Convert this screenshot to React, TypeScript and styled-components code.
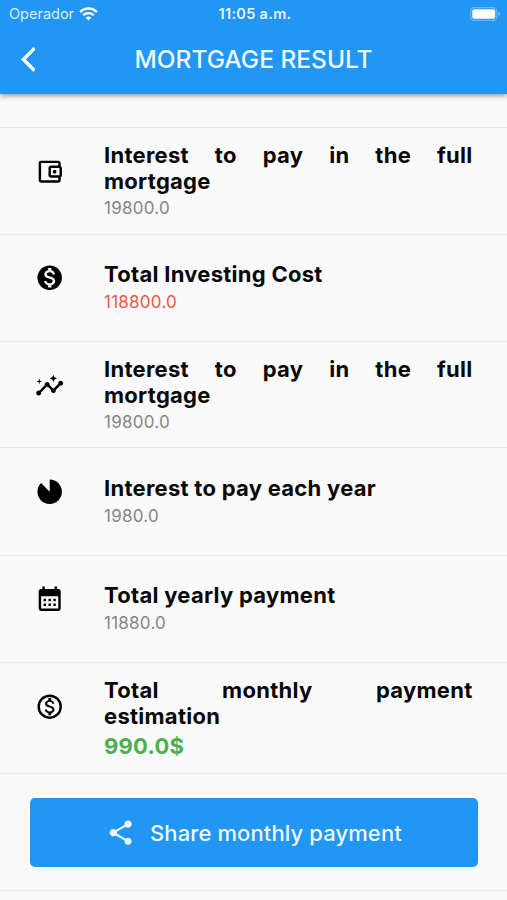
import React from "react";
import type { ReactNode } from "react";
import styled, { createGlobalStyle } from "styled-components";
import {
  MdOutlineAccountBalanceWallet,
  MdMonetizationOn,
  MdInsights,
  MdIncompleteCircle,
  MdCalendarMonth,
  MdShare,
} from "react-icons/md";

const GlobalStyle = createGlobalStyle`
  * { box-sizing: border-box; }
  body {
    margin: 0;
    background: #fafafa;
    font-family: Inter, "Liberation Sans", sans-serif;
  }
`;

const Screen = styled.div`
  width: 507px;
  height: 900px;
  overflow: hidden;
  display: flex;
  flex-direction: column;
  background: #fafafa;
`;

const Header = styled.header`
  height: 94px;
  flex: none;
  background: #2196f3;
  color: #fff;
  box-shadow: 0 2px 5px rgba(0, 0, 0, 0.38);
  z-index: 1;
`;

const StatusBar = styled.div`
  height: 26px;
  display: grid;
  grid-template-columns: 1fr auto 1fr;
  align-items: center;
  padding: 1px 6px 0 9px;
  font-size: 14.5px;
  line-height: 26px;
`;

const Carrier = styled.div`
  display: flex;
  align-items: center;
  gap: 5px;
  color: #d8edfd;
`;

const Clock = styled.div`
  font-weight: 600;
  font-size: 14.5px;
  letter-spacing: 0.3px;
  color: #e6f4fe;
`;

const BatterySlot = styled.div`
  display: flex;
  justify-content: flex-end;
  padding-bottom: 1px;
`;

const NavBar = styled.div`
  height: 68px;
  display: grid;
  grid-template-columns: 64px 1fr 64px;
  align-items: center;
`;

const BackButton = styled.button`
  border: 0;
  background: none;
  color: #fff;
  padding: 0 0 1px 20.5px;
  display: flex;
`;

const PageTitle = styled.h1`
  margin: 0 0 2px;
  text-align: center;
  font-size: 24.5px;
  font-weight: 500;
  white-space: nowrap;
  color: #edf7ff;
`;

const List = styled.main`
  padding-top: 33px;
`;

const Row = styled.section<{ $height: number }>`
  height: ${(p) => p.$height}px;
  border-top: 1px solid #ececec;
  display: grid;
  grid-template-columns: 104px 368.5px;
`;

const IconCell = styled.div<{ $top: number }>`
  padding: ${(p) => p.$top}px 0 0 35px;
  color: #000;
  svg { display: block; }
`;

const Details = styled.div<{ $top: number }>`
  padding-top: ${(p) => p.$top}px;
`;

const Label = styled.h2`
  margin: 0;
  font-size: 22px;
  line-height: 25.7px;
  font-weight: 650;
  letter-spacing: 0.27px;
  text-align: justify;
  color: #080808;
`;

const Amount = styled.p<{ $tone: Tone }>`
  margin: 0;
  font-size: ${(p) => (p.$tone === "positive" ? 22 : 17)}px;
  font-weight: ${(p) => (p.$tone === "positive" ? 650 : 400)};
  line-height: ${(p) => (p.$tone === "positive" ? 34 : 28)}px;
  letter-spacing: 0.25px;
  color: ${(p) => tones[p.$tone]};
`;

const Actions = styled.footer`
  height: 118px;
  border-top: 1px solid #ececec;
  border-bottom: 1px solid #ececec;
  padding: 24px 29px 0 30px;
`;

const ShareButton = styled.button`
  width: 448px;
  height: 69px;
  border: 0;
  border-radius: 5px;
  background: #2196f3;
  color: #edf7ff;
  display: flex;
  align-items: center;
  justify-content: center;
  gap: 14.5px;
  font-family: inherit;
  font-size: 22px;
  font-weight: 500;
  letter-spacing: 0.1px;
  white-space: nowrap;
`;

type Tone = "normal" | "negative" | "positive";

const tones: Record<Tone, string> = {
  normal: "#858585",
  negative: "#f2564b",
  positive: "#4caf50",
};

interface Result {
  icon: ReactNode;
  label: string;
  amount: string;
  tone?: Tone;
  height: number;
  iconTop: number;
  textTop: number;
}

const ICON = 29.4;

const DollarRingIcon = () => (
  <svg width={ICON} height={ICON} viewBox="0 0 24 24" fill="currentColor">
    <circle cx="12" cy="12" r="9" fill="none" stroke="currentColor" strokeWidth="2" />
    <path d="M12.31 11.14c-1.77-.45-2.34-.94-2.34-1.67 0-.84.79-1.43 2.1-1.43 1.38 0 1.9.66 1.94 1.64h1.71c-.05-1.34-.87-2.57-2.49-2.97V5H10.9v1.69c-1.51.32-2.72 1.3-2.72 2.81 0 1.79 1.49 2.69 3.66 3.21 1.95.46 2.34 1.15 2.34 1.87 0 .53-.39 1.39-2.1 1.39-1.6 0-2.23-.72-2.32-1.64H8.04c.1 1.7 1.36 2.66 2.86 2.97V19h2.34v-1.67c1.52-.29 2.72-1.16 2.73-2.77-.01-2.2-1.9-2.96-3.66-3.42z" />
  </svg>
);

const results: Result[] = [
  { icon: <MdOutlineAccountBalanceWallet size={ICON} />, label: "Interest to pay in the full mortgage", amount: "19800.0", height: 107, iconTop: 29, textTop: 15 },
  { icon: <MdMonetizationOn size={ICON} />, label: "Total Investing Cost", amount: "118800.0", tone: "negative", height: 107, iconTop: 28, textTop: 27 },
  { icon: <MdInsights size={ICON} />, label: "Interest to pay in the full mortgage", amount: "19800.0", height: 106, iconTop: 29, textTop: 15 },
  { icon: <MdIncompleteCircle size={ICON} />, label: "Interest to pay each year", amount: "1980.0", height: 108, iconTop: 29, textTop: 28 },
  { icon: <MdCalendarMonth size={ICON} />, label: "Total yearly payment", amount: "11880.0", height: 107, iconTop: 28, textTop: 27 },
  { icon: <DollarRingIcon />, label: "Total monthly payment estimation", amount: "990.0$", tone: "positive", height: 111, iconTop: 29, textTop: 15 },
];

const WifiIcon = () => (
  <svg width="19" height="14" viewBox="0 0 19 14" fill="none" stroke="#fff" strokeWidth="2.3">
    <path d="M1.1 5.1C5.8.3 13.2.3 17.9 5.1" />
    <path d="M4.2 8.2c3-2.9 7.6-2.9 10.6 0" />
    <path d="M9.5 13.6 6.6 10.7c1.7-1.5 4.1-1.5 5.8 0Z" fill="#fff" stroke="none" />
  </svg>
);

const BatteryIcon = () => (
  <svg width="31" height="14" viewBox="0 0 31 14">
    <rect x="0.6" y="0.6" width="26.3" height="12.8" rx="3.6" fill="none" stroke="#6db9f8" strokeWidth="1.2" />
    <rect x="2.3" y="2.3" width="22.9" height="9.4" rx="2" fill="#fff" />
    <path d="M28.3 4.8c2.2.7 2.2 3.7 0 4.4Z" fill="#6db9f8" />
  </svg>
);

const BackIcon = () => (
  <svg width="14.9" height="24.9" viewBox="-0.2 1.9 12.1 20.2" fill="currentColor" stroke="currentColor" strokeWidth="0.4">
    <path d="M11.67 3.87 9.9 2.1 0 12l9.9 9.9 1.77-1.77L3.54 12z" />
  </svg>
);

export default function App() {
  return (
    <>
      <GlobalStyle />
      <Screen>
        <Header>
          <StatusBar>
            <Carrier>
              Operador
              <WifiIcon />
            </Carrier>
            <Clock>11:05 a.m.</Clock>
            <BatterySlot>
              <BatteryIcon />
            </BatterySlot>
          </StatusBar>
          <NavBar>
            <BackButton aria-label="Back">
              <BackIcon />
            </BackButton>
            <PageTitle>MORTGAGE RESULT</PageTitle>
          </NavBar>
        </Header>
        <List>
          {results.map((r, i) => (
            <Row key={i} $height={r.height}>
              <IconCell $top={r.iconTop}>{r.icon}</IconCell>
              <Details $top={r.textTop}>
                <Label>{r.label}</Label>
                <Amount $tone={r.tone ?? "normal"}>{r.amount}</Amount>
              </Details>
            </Row>
          ))}
          <Actions>
            <ShareButton>
              <MdShare size={ICON} />
              Share monthly payment
            </ShareButton>
          </Actions>
        </List>
      </Screen>
    </>
  );
}
